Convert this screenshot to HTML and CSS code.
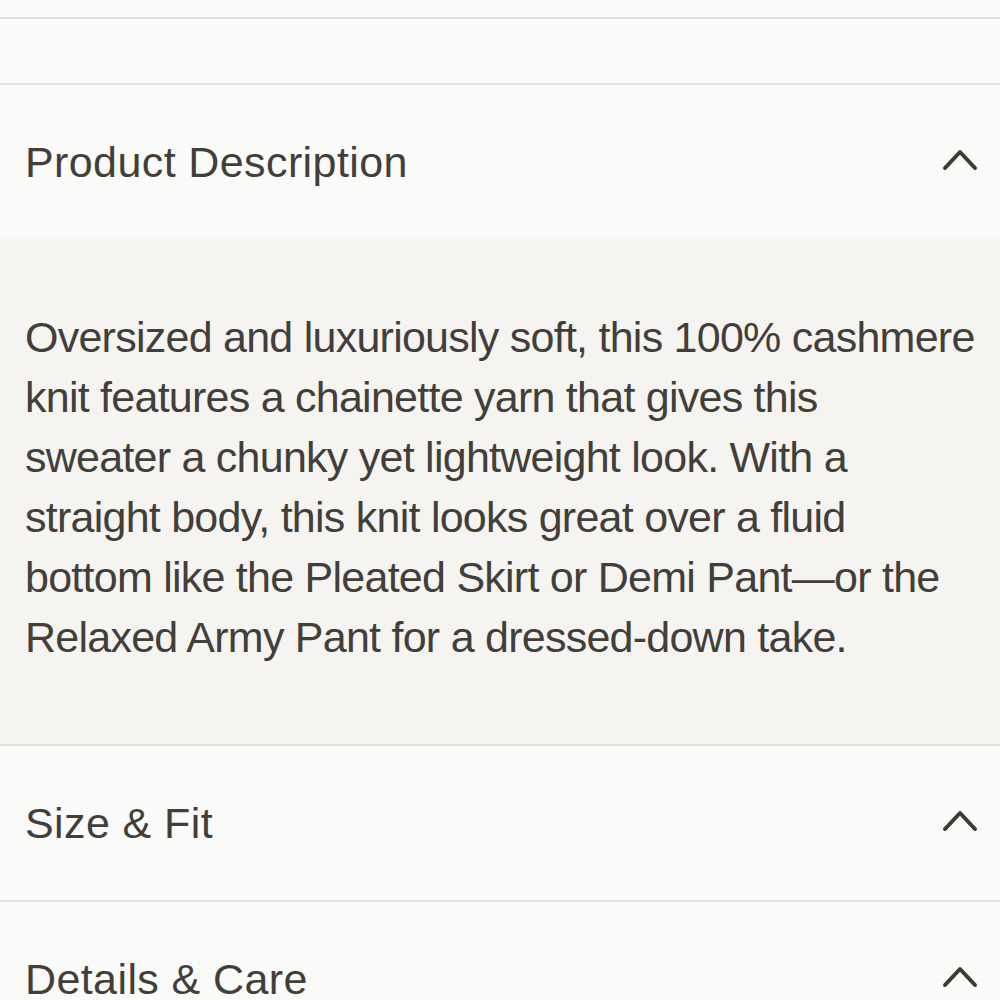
FILE: index.html
```html
<!DOCTYPE html>
<html>
<head>
    <meta charset="UTF-8">
    <title>Product Description</title>
    <link rel="stylesheet" href="styles.css">
</head>

<body>
<div class="prev-section"></div>
<div class="spacer"></div>

<!-- Accordion -->
<div class="accordion">
    <div class="acc-item open">
        <div class="acc-head">
            <span>Product Description</span>
            <svg class="chevron" width="36" height="22" viewBox="0 0 36 22"><path d="M3 19 L18 3 L33 19" /></svg>
        </div>
        <div class="acc-body">
            <p>Oversized and luxuriously soft, this 100% cashmere<br>
            knit features a chainette yarn that gives this<br>
            sweater a chunky yet lightweight look. With a<br>
            straight body, this knit looks great over a fluid<br>
            bottom like the Pleated Skirt or Demi Pant—or the<br>
            Relaxed Army Pant for a dressed-down take.</p>
        </div>
    </div>
    <div class="acc-item">
        <div class="acc-head">
            <span>Size &amp; Fit</span>
            <svg class="chevron" width="36" height="22" viewBox="0 0 36 22"><path d="M3 19 L18 3 L33 19" /></svg>
        </div>
    </div>
    <div class="acc-item">
        <div class="acc-head">
            <span>Details &amp; Care</span>
            <svg class="chevron" width="36" height="22" viewBox="0 0 36 22"><path d="M3 19 L18 3 L33 19" /></svg>
        </div>
    </div>
</div>
</body>
</html>
```

FILE: styles.css
```css
body {margin: 0; background: #fafaf8; color: #423e39; font-family: "Liberation Sans", Arial, sans-serif;}
.prev-section {height: 17px; border-bottom: 2px solid #e2e1de;}
.spacer {height: 64px; border-bottom: 2px solid #e2e1de;}
.acc-item {border-bottom: 2px solid #e2e1de;}
.acc-head {display: flex; justify-content: space-between; align-items: center; height: 154px; padding: 0 22px 0 25px; font-size: 43px; letter-spacing: 0.4px;}
.chevron {fill: none; stroke: #3e3a36; stroke-width: 4; stroke-linecap: round; stroke-linejoin: round; margin-top: -4px;}
.acc-body {background: #f5f4f1; padding: 68px 25px 77px;}
.acc-body p {margin: 0; font-size: 43px; line-height: 60px; letter-spacing: -0.75px; white-space: nowrap;}
```
